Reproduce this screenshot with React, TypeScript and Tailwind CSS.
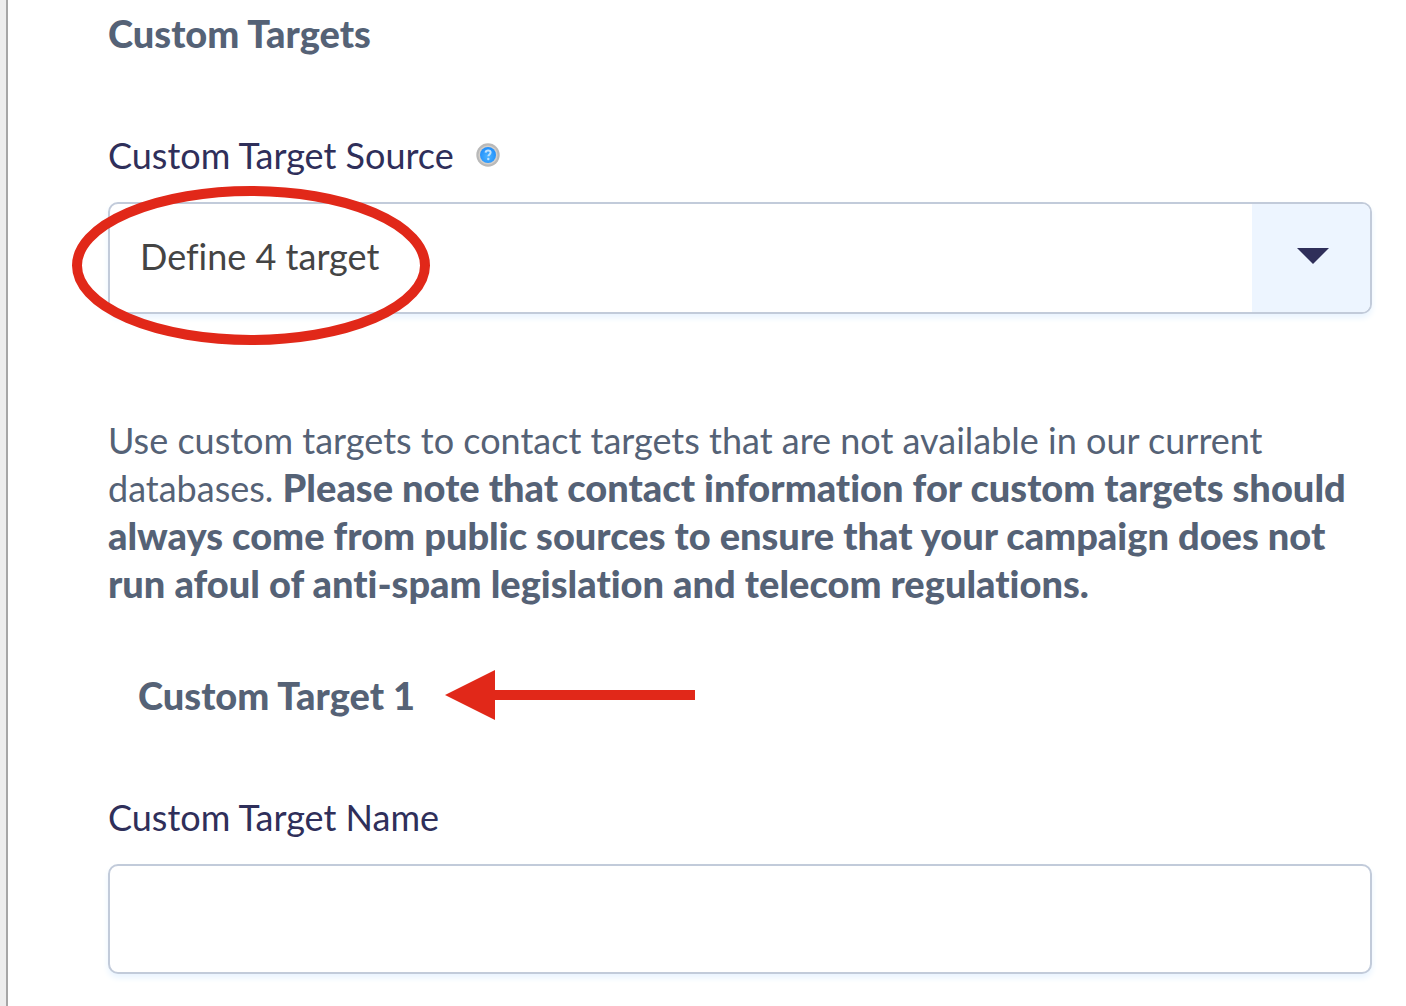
import { useState } from 'react';

const SOURCES = ['Define 1 target', 'Define 2 target', 'Define 3 target', 'Define 4 target', 'Define 5 target'];

function HelpIcon() {
  return (
    <svg viewBox="0 0 24 24" className="w-6 h-6" aria-hidden="true">
      <defs>
        <radialGradient id="help-fill" cx="50%" cy="60%" r="55%">
          <stop offset="0%" stopColor="#4db4ff" />
          <stop offset="100%" stopColor="#2290fb" />
        </radialGradient>
      </defs>
      <circle cx="12" cy="12" r="11.7" fill="#b9b9b9" />
      <circle cx="12" cy="12" r="9.6" fill="#d3cfca" />
      <circle cx="12" cy="12" r="8" fill="url(#help-fill)" />
      <path d="M9.6 9.6c.2-1.5 1.2-2 2.5-2 1.5 0 2.5.8 2.5 2 0 1.7-2.2 1.9-2.2 3.6" fill="none" stroke="#bfe2ff" strokeWidth="2" />
      <circle cx="12.3" cy="16" r="1.2" fill="#bfe2ff" />
    </svg>
  );
}

function Arrow() {
  return (
    <svg viewBox="0 0 250 50" className="w-[250px] h-[50px] shrink-0" aria-hidden="true">
      <path d="M0 25 50 0V20H250V30H50V50Z" fill="#e12819" />
    </svg>
  );
}

export default function App() {
  const [source, setSource] = useState('Define 4 target');
  const [name, setName] = useState('');

  return (
    <div className="min-h-screen flex bg-white font-['Lato',sans-serif] text-[36px] leading-[48px] text-[#556276] [font-variant-ligatures:none]">
      <div className="w-2 shrink-0 bg-[#ededed] border-r-2 border-[#a6a6a6]" />

      <main className="flex-1 min-w-0 pl-[100px] pr-[34px] pt-[9px] pb-8">
        <h2 className="font-black text-[38px] leading-[48px]">Custom Targets</h2>

        <div className="mt-[74px] flex items-center gap-[22px]">
          <label htmlFor="target-source" className="text-[#2f2f5a]">Custom Target Source</label>
          <button type="button" aria-label="Help"><HelpIcon /></button>
        </div>
        <div className="relative mt-[23px]">
          <select
            id="target-source"
            value={source}
            onChange={e => setSource(e.target.value)}
            className="block w-full h-28 appearance-none rounded-[10px] border-2 border-[#c2cbda] bg-white pl-[30px] pr-[130px] pb-1 text-[#444] shadow-[0_4px_6px_#e9f4ff]"
          >
            {SOURCES.map(s => <option key={s}>{s}</option>)}
          </select>
          <div className="pointer-events-none absolute right-0.5 inset-y-0.5 w-[118px] rounded-r-lg bg-[#edf5ff] pl-1 pb-1 flex items-center justify-center">
            <svg viewBox="0 0 32 16" className="w-8 h-4" aria-hidden="true">
              <path d="M0 0H32L16 16Z" fill="#2f2f5a" />
            </svg>
          </div>
          <svg viewBox="0 0 358 160" className="pointer-events-none absolute -left-9 -top-4 w-[358px] h-40" aria-hidden="true">
            <ellipse cx="179" cy="79.5" rx="174" ry="74.5" fill="none" stroke="#e12819" strokeWidth="10" />
          </svg>
        </div>

        <p className="mt-[102px]">
          Use custom targets to contact targets that are not available in our current databases.{' '}
          <strong className="font-black text-[38px] leading-10">
            Please note that contact information for custom targets should always come from public sources to ensure that your campaign does not run afoul of anti-spam legislation and telecom regulations.
          </strong>
        </p>

        <div className="mt-[63px] pl-[30px] h-12 flex items-center gap-[30px]">
          <h3 className="font-black text-[38px] leading-[48px]">Custom Target 1</h3>
          <Arrow />
        </div>

        <label htmlFor="target-name" className="mt-[74px] block text-[#2f2f5a]">Custom Target Name</label>
        <input
          id="target-name"
          type="text"
          value={name}
          onChange={e => setName(e.target.value)}
          className="mt-[23px] block w-full h-[110px] rounded-[10px] border-2 border-[#c2cbda] bg-white px-[30px] text-[#444] shadow-[0_4px_6px_#e9f4ff]"
        />
      </main>
    </div>
  );
}
